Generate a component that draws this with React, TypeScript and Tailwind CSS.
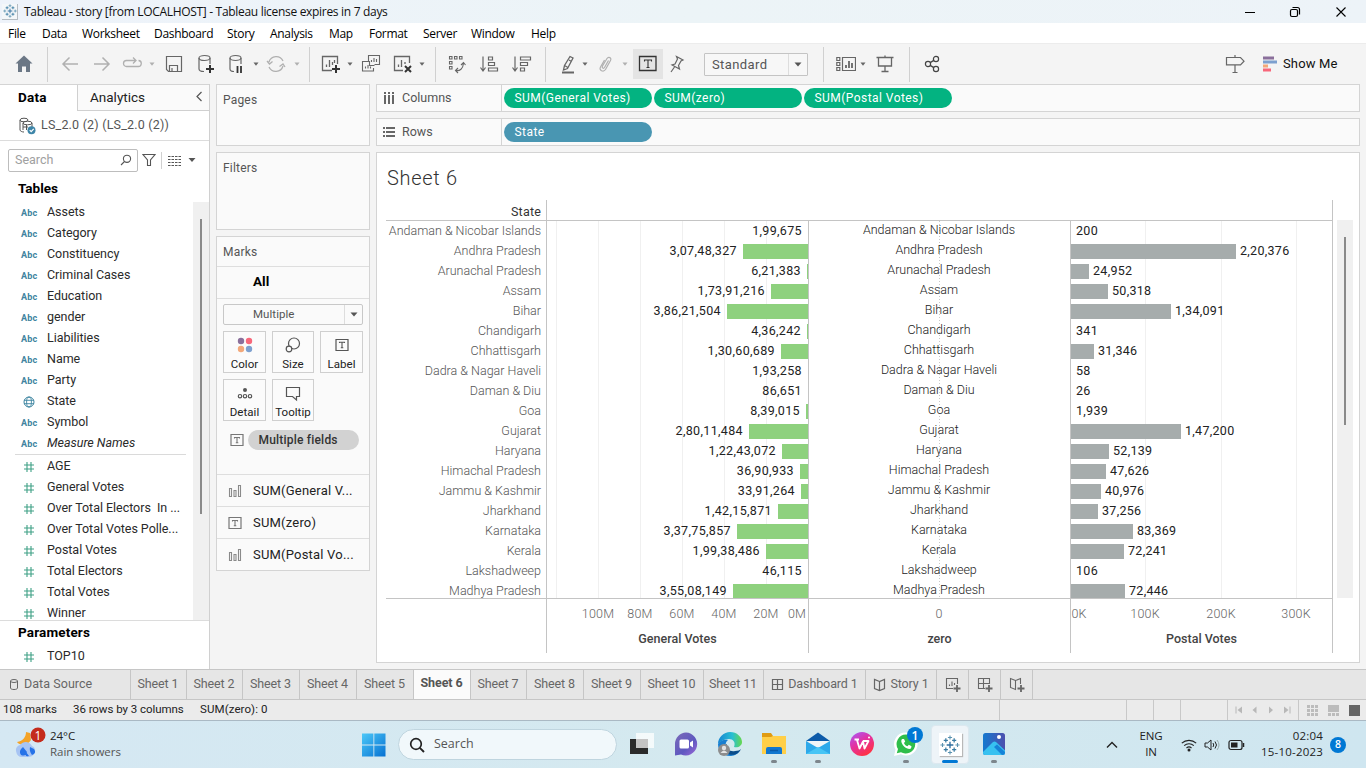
import React from "react";

const SEG = "font-['Open_Sans','Noto_Sans',sans-serif]";

function Icon({ w = 20, h = 20, className = "", children }: { w?: number; h?: number; className?: string; children: React.ReactNode }) {
  return (
    <svg width={w} height={h} viewBox={`0 0 ${w} ${h}`} fill="none" stroke="currentColor" strokeWidth="1.2" className={`block shrink-0 ${className}`}>
      {children}
    </svg>
  );
}

function Caret({ className = "" }: { className?: string }) {
  return (
    <svg width="8" height="20" viewBox="0 0 8 20" className={`block shrink-0 ${className}`}>
      <path d="M1.5 8.5h5L4 11.7z" fill="currentColor" />
    </svg>
  );
}

function Sep({ className = "" }: { className?: string }) {
  return <div className={`h-[35px] w-px shrink-0 bg-[#d0d0d0] ${className}`} />;
}

function Logo({ size }: { size: number }) {
  return (
    <svg width={size} height={size} viewBox="0 0 24 24" className="block shrink-0" fill="none">
      <path d="M12 8v8M8 12h8" stroke="#2f6f9f" strokeWidth="1.6" />
      <path d="M7 4v5M4.5 6.5h5M17 4v5M14.5 6.5h5M7 15v5M4.500 17.500h5M17 15v5M14.500 17.500h5" stroke="#3a7ca3" strokeWidth="1.5" />
      <path d="M12 .5v5M9.500 3h5M12 18.500v5M9.500 21h5M3 9.500v5M.5 12h5M21 9.500v5M18.500 12h5" stroke="#5b93b0" strokeWidth="1.300" />
    </svg>
  );
}

function TitleBar() {
  return (
    <div className={`flex h-[23px] shrink-0 items-center bg-linear-to-r from-[#eef3fa] via-[#ecf4f7] to-[#edf3f8] ${SEG}`}>
      <div className="ml-[2px] flex size-4 items-center justify-center border-r border-b border-[#b5bcc2] bg-[#f4f7f9]">
        <Logo size={14} />
      </div>
      <span className="ml-[6px] text-[12px] tracking-[-0.310px] whitespace-nowrap text-[#111]">Tableau - story [from LOCALHOST] - Tableau license expires in 7 days</span>
      <div className="mr-[19px] ml-auto flex items-center gap-[34px] text-black">
        <Icon w={12} h={12} className="-mr-px"><path d="M1 6.500h10" strokeWidth="1" /></Icon>
        <Icon w={12} h={12}><rect x="1.500" y="3.500" width="7" height="7" rx="1.500" /><path d="M3.500 1.500h5q2 0 2 2v5" /></Icon>
        <Icon w={12} h={12}><path d="M1.500 1.500l9 9M10.500 1.500l-9 9" strokeWidth="1.100" /></Icon>
      </div>
    </div>
  );
}

function MenuBar() {
  const items: [string, string][] = [
    ["File", "w-[34px]"], ["Data", "w-[40px]"], ["Worksheet", "w-[72px]"], ["Dashboard", "w-[73px]"], ["Story", "w-[43px]"],
    ["Analysis", "w-[59px]"], ["Map", "w-[40px]"], ["Format", "w-[54px]"], ["Server", "w-[48px]"], ["Window", "w-[60px]"], ["Help", "w-[40px]"],
  ];
  return (
    <div className={`flex h-[20px] shrink-0 items-center bg-white pt-px pl-2 text-[12px] tracking-[-0.300px] text-black ${SEG}`}>
      {items.map(([t, w]) => <span key={t} className={`${w} shrink-0 whitespace-nowrap`}>{t}</span>)}
    </div>
  );
}

function Toolbar() {
  return (
    <div className="flex h-[41px] shrink-0 items-center border-t border-[#ececec] bg-[#f4f4f4] text-[#666]">
      <div className="flex w-[47px] shrink-0 justify-center pl-px text-[#6b7785]">
        <Icon><path d="M10 1.500L18.500 9.500H16V18h-4v-5.500H8V18H4V9.500H1.500z" fill="currentColor" stroke="none" /></Icon>
      </div>
      <Sep />
      <Icon className="ml-[12px] text-[#b0b0b0]"><path d="M18 10H3M9.500 3.500L3 10l6.500 6.500" strokeWidth="1.500" /></Icon>
      <Icon className="ml-[12px] text-[#b0b0b0]"><path d="M2 10h15M10.500 3.500L17 10l-6.500 6.500" strokeWidth="1.500" /></Icon>
      <Icon className="ml-[10px] text-[#b0b0b0]"><path d="M9 12.500H4.500a3 3 0 0 1 0-6H14M11 3.500l3 3-3 3M9 12.500h7a3 3 0 0 0 .5-6" strokeWidth="1.300" /></Icon>
      <Caret className="ml-[6px] text-[#b0b0b0]" />
      <Icon className="ml-[8px]"><path d="M2.500 2.500h15v15h-13l-2-2zM5.500 17v-5.500h8V17M8 14v3" /></Icon>
      <Icon className="ml-[12px]"><ellipse cx="8.500" cy="4" rx="5.500" ry="2.500" /><path d="M3 4v11c0 1.500 2 2.500 5 2.500M14 4v6" /><path d="M14 11v8M10 15h8" stroke="#333" strokeWidth="2" /></Icon>
      <Icon className="ml-[10px]"><ellipse cx="9.500" cy="4" rx="5.500" ry="2.500" /><path d="M4 4v11c0 1.500 2 2.500 4 2.500M15 4v6" /><path d="M11.500 12v7M15 12v7" stroke="#333" strokeWidth="1.800" /></Icon>
      <Caret className="ml-[6px]" />
      <Icon className="ml-[6px] text-[#b0b0b0]"><path d="M3 8a7.500 7.500 0 0 1 14-1M17 12a7.500 7.500 0 0 1-14 1M1 7l2.500 3L6.500 7.500M13.500 12.500l3.500-2.500 2 3" strokeWidth="1.300" /></Icon>
      <Caret className="ml-[7px] text-[#b0b0b0]" />
      <Sep className="ml-[8px]" />
      <Icon className="ml-[11px]"><path d="M11 16.500H1.500v-14h15V10M5.500 13v-2.500M8.500 13V6M11.500 11V8M13.500 9V6" strokeWidth="1.300" /><path d="M15 11v8M11 15h8" stroke="#333" strokeWidth="2" /></Icon>
      <Caret className="ml-[5px]" />
      <Icon className="ml-[7px]"><path d="M7.500 7V1.500h11v9h-5M12.500 14v3h-11V7.500h7v4h5M10.500 8V6M13 8V4M15.500 8V5M4.500 14.500v-2M7 14.500V11M9.500 14.500v-2" strokeWidth="1.100" /></Icon>
      <Icon className="ml-[12px]"><path d="M10 16.500H1.500v-14h15V9M5.500 13v-2.500M8.500 13V6M12 10V8" strokeWidth="1.300" /><path d="M12 12l6 6M18 12l-6 6" stroke="#333" strokeWidth="2" /></Icon>
      <Caret className="ml-[5px]" />
      <Sep className="ml-[9px]" />
      <Icon className="ml-[11px]"><path d="M2.500 2.500h2.500v2.500h-2.500zM7.500 2.500h2.500v2.500h-2.500zM12.500 2.500H15v2.500h-2.500zM2.500 7.500h2.500V10h-2.500zM2.500 12.500h2.500V15h-2.500zM8.500 16.500q7 1 8-7M14 11l2.500-2.500L18.500 11M11 14l-2.500 2.500L11 19" strokeWidth="1.100" /></Icon>
      <Icon className="ml-[12px]"><path d="M4 2.500v14M1.500 13.500L4 17l2.500-3.500M9.500 3h4v3h-4zM9.500 8.500h6v3h-6zM9.500 14h9v3h-9z" /></Icon>
      <Icon className="ml-[13px]"><path d="M3 2.500v14M.5 13.500L3 17l2.500-3.500M8.500 3h10v3h-10zM8.500 8.500h7v3h-7zM8.500 14h4v3h-4z" /></Icon>
      <Sep className="ml-[13px]" />
      <Icon className="ml-[12px]"><path d="M12 2.500l3 1.500-5.500 10.500-4 1.500 1-4.500zM11 6l2.500 1.500M6.500 11.500l3 1.800" strokeWidth="1.300" /><path d="M4 18.500h12" strokeWidth="2" /></Icon>
      <Caret className="ml-[3px]" />
      <Icon className="ml-[6px] text-[#b0b0b0]"><path d="M13.500 6.500l-4 7c-1 1.500-3 .5-2-1.500l4.500-7.500c1.500-2.500 5-.5 3.500 2l-5 9c-2 3-7 1-5-2.500l4-7" strokeWidth="1.200" /></Icon>
      <Caret className="ml-[6px] text-[#b0b0b0]" />
      <div className="ml-[4px] flex size-[30px] shrink-0 items-center justify-center bg-[#e4e4e4] text-[#333]">
        <Icon><path d="M1.500 2.500h16.500v14h-16.500z" strokeWidth="1.300" /><path d="M6.500 7.500V6h7v1.500M10 6v7.500M8.500 13.500h3" strokeWidth="1.100" /></Icon>
      </div>
      <Icon className="ml-[4px]"><path d="M9.500 2.500l6.500 3.500-2 1-2.500 4.500 1 3.500-7.500-4 3-1L10.500 5zM7.500 13l-3.500 5" strokeWidth="1.200" /></Icon>
      <div className="ml-[17px] flex h-[23px] w-[104px] shrink-0 items-center rounded-[1px] border border-[#c4c4c4] bg-[#f7f7f7]">
        <span className="w-[84px] border-r border-[#ddd] pl-[7px] text-[13px] leading-[21px] tracking-[0.400px] text-[#555]">Standard</span>
        <svg width="18" height="20" viewBox="0 0 18 20"><path d="M5.500 8.500h7L9 12.500z" fill="#555" /></svg>
      </div>
      <Sep className="ml-[15px]" />
      <Icon className="ml-[12px]"><path d="M.8 3.500h3v3h-3zM.8 8.500h3v3h-3zM.8 13.500h3v3h-3zM6.500 3.500h13v13h-13z" /><path d="M10 14v-3M13 14V7M16 14V9" strokeWidth="1.800" /></Icon>
      <Caret className="ml-[3px]" />
      <Icon className="ml-[8px]"><path d="M1.500 3.500h17M3.500 3.500v8.500h13V3.500M10 1.500v2M10 12v5.500M6.500 17.500h7" strokeWidth="1.300" /></Icon>
      <Sep className="ml-[14px]" />
      <Icon className="ml-[12px] text-[#444]"><circle cx="6" cy="10" r="2.600" /><circle cx="14" cy="5" r="2.600" /><circle cx="14" cy="15" r="2.600" /><path d="M8.200 8.600L11.800 6.400M8.200 11.400l3.600 2.200" strokeWidth="1.300" /></Icon>
      <Icon className="mr-[18px] ml-auto"><path d="M1.500 3.500h14l3.500 3.700-3.500 3.700h-14zM10 1v2.500M10 11v7.500M7.500 18.500h5" /></Icon>
      <svg width="14" height="16" viewBox="0 0 14 16" className="shrink-0"><path d="M0 .5h11v3H0z" fill="#8a6f9b" /><path d="M0 4.500h14v3H0z" fill="#7da0cf" /><path d="M0 8.500h5v3H0z" fill="#f3a87a" /><path d="M0 12.500h8v3H0z" fill="#f8677a" /></svg>
      <span className="mr-[28px] ml-[6px] w-[55px] text-[13px] tracking-[0.150px] whitespace-nowrap text-[#111]">Show Me</span>
    </div>
  );
}

const DIMS = ["Assets", "Category", "Constituency", "Criminal Cases", "Education", "gender", "Liabilities", "Name", "Party", "State", "Symbol", "Measure Names"];
const MEAS = ["AGE", "General Votes", "Over Total Electors  In ...", "Over Total Votes Polle...", "Postal Votes", "Total Electors", "Total Votes", "Winner"];

function Hash() {
  return <Icon w={12} h={12} className="mr-[12px] ml-[23px] text-[#3fa085]"><path d="M4 1v10M8 1v10M1 4h10M1 8h10" strokeWidth="1.100" /></Icon>;
}

function Field({ name, kind }: { name: string; kind: "dim" | "mea" }) {
  return (
    <div className="flex h-[21px] shrink-0 items-center text-[12.5px] tracking-[-0.030px] whitespace-pre text-[#2a2a2a]">
      {kind === "mea" ? <Hash /> : name === "State" ? (
        <Icon w={12} h={12} className="mr-[12px] ml-[23px] text-[#3d85a0]"><circle cx="6" cy="6" r="5" strokeWidth="1" /><ellipse cx="6" cy="6" rx="2.400" ry="5" strokeWidth="0.900" /><path d="M1 4.300h10M1 7.700h10" strokeWidth="0.900" /></Icon>
      ) : <span className="ml-[21px] w-[26px] pt-[2px] text-[9px] font-bold tracking-[0.2px] text-[#4084a0]">Abc</span>}
      <span className={name === "Measure Names" ? "italic" : ""}>{name}</span>
    </div>
  );
}

function DataPane() {
  return (
    <div className="flex w-[210px] shrink-0 flex-col border-r border-[#d0d0d0] bg-white">
      <div className="flex h-[27px] shrink-0 border-t border-[#d4d4d4]">
        <div className="w-[77px] pt-[3px] pl-[18px] text-[13.500px] leading-[19px] font-bold tracking-[0.200px] text-black">Data</div>
        <div className="flex flex-1 items-start border-b border-l border-[#d0d0d0] bg-[#fafafa] pt-[3px] pl-[12px] text-[13.500px] leading-[19px] text-[#222]">
          Analytics
          <Icon w={8} h={12} className="mt-[3px] mr-[6px] ml-auto text-[#555]"><path d="M6.500 1L2 5.500 6.500 10" /></Icon>
        </div>
      </div>
      <div className="flex h-[30px] shrink-0 items-center border-b border-[#dcdcdc] text-[12.500px] tracking-[0.200px] text-[#555]">
        <Icon w={18} h={18} className="mr-[4px] ml-[19px]"><ellipse cx="5" cy="3" rx="4" ry="1.800" strokeWidth="1" /><path d="M1 3v10c0 1 2 2 4 2" strokeWidth="1" /><ellipse cx="8.500" cy="6" rx="4.500" ry="1.800" strokeWidth="1" /><path d="M4 6v7M13 6v4M4 10h5M7.500 8v5" strokeWidth="1" /><circle cx="12.500" cy="13.200" r="4" fill="#3d85a8" stroke="none" /><path d="M10.700 13.200l1.500 1.500 2.500-2.800" stroke="#fff" /></Icon>
        LS_2.0 (2) (LS_2.0 (2))
      </div>
      <div className="flex h-[37px] shrink-0 items-center pt-px pl-2 text-[#555]">
        <div className="flex h-[23px] w-[130px] items-center rounded-[2px] border border-[#bdbdbd] pl-[6px] text-[12.500px] text-[#a0a0a0]">
          Search
          <Icon w={12} h={12} className="mr-[5px] ml-auto text-[#555]"><circle cx="7" cy="4.800" r="3.600" strokeWidth="1.100" /><path d="M4.500 7.500L1 11" strokeWidth="1.100" /></Icon>
        </div>
        <Icon w={14} h={14} className="ml-[4px]"><path d="M1 1.500h12L8.500 7v5.500h-3V7z" strokeWidth="1.100" /></Icon>
        <div className="ml-[5px] h-[17px] w-px bg-[#d0d0d0]" />
        <Icon w={13} h={11} className="ml-[6px]"><path d="M0 1.500h13M0 4.500h13M0 7.500h13M0 10.500h13" strokeDasharray="2.500 1" strokeWidth="1" /></Icon>
        <Icon w={8} h={8} className="ml-[7px]"><path d="M.5 2h7L4 6z" fill="currentColor" stroke="none" /></Icon>
      </div>
      <div className="h-[24px] shrink-0 pl-[18px] text-[13.500px] leading-[20px] font-bold text-black">Tables</div>
      <div className="flex h-[418px] shrink-0 overflow-hidden">
        <div className="flex w-[193px] flex-col">
          {DIMS.map((d) => <Field key={d} name={d} kind="dim" />)}
          <div className="mr-[7px] ml-[15px] h-px shrink-0 bg-[#dadada]" />
          <div className="h-px shrink-0" />
          {MEAS.map((d) => <Field key={d} name={d} kind="mea" />)}
        </div>
        <div className="h-full w-4 bg-[#f0f0f0] pt-[17px] pl-[7px]"><div className="h-[295px] w-[2px] bg-[#8a8a8a]" /></div>
      </div>
      <div className="flex-1 border-t border-[#dcdcdc]">
        <div className="h-[25px] pl-[18px] text-[13.500px] leading-[23px] font-bold tracking-[0.150px] text-black">Parameters</div>
        <Field name="TOP10" kind="mea" />
      </div>
    </div>
  );
}

function MarkButton({ label, children }: { label: string; children: React.ReactNode }) {
  return (
    <div className="flex h-[42px] flex-col items-center justify-between border border-[#cfcfcf] bg-[#fbfbfb] pt-[4px] text-[11.500px] leading-[15px] tracking-[0.050px] whitespace-nowrap text-[#222]">
      <Icon className="text-[#555]" w={18} h={18}>{children}</Icon>
      <span className="shrink-0">{label}</span>
    </div>
  );
}

function BarsIcon() {
  return <Icon w={14} h={14} className="mr-[11px] ml-[11px] text-[#8a8a8a]"><path d="M1.500 4.500h2v8h-2zM6 6.500h2v6H6zM10.500 1.500h2v11h-2z" strokeWidth="1.100" /></Icon>;
}

function TBox({ className = "" }: { className?: string }) {
  return <Icon w={14} h={14} className={className}><path d="M1 1.500h12v11H1z" /><path d="M4.500 5.500V4.500h5v1M7 4.500v5M5.800 9.700h2.500" strokeWidth="1.100" /></Icon>;
}

function Cards() {
  return (
    <div className="ml-[6px] flex w-[154px] shrink-0 flex-col gap-[6px] text-[12px] tracking-[0.2px] text-[#555]">
      <div className="h-[62px] shrink-0 border border-[#d4d4d4] bg-[#fafafa] pt-[6px] pl-[6px] leading-[18px]">Pages</div>
      <div className="h-[78px] shrink-0 border border-[#d4d4d4] bg-[#fafafa] pt-[6px] pl-[6px] leading-[18px]">Filters</div>
      <div className="flex h-[335px] shrink-0 flex-col border border-[#d4d4d4] bg-[#fafafa]">
        <div className="h-[30px] shrink-0 border-b border-[#dedede] pl-[6px] leading-[31px]">Marks</div>
        <div className="h-[32px] shrink-0 border-b border-[#dedede] pl-[36px] text-[13.500px] leading-[29px] font-bold tracking-normal text-black">All</div>
        <div className="mx-[6px] mt-[5px] flex h-[21px] shrink-0 items-center rounded-[2px] border border-[#c8c8c8] text-[11.500px] tracking-[0.050px]">
          <span className="flex-1 pl-[29px]">Multiple</span>
          <span className="flex h-full w-[18px] items-center justify-center border-l border-[#ddd]">
            <svg width="8" height="5"><path d="M.5.5h7L4 4.500z" fill="#555" /></svg>
          </span>
        </div>
        <div className="mx-[6px] mt-[6px] grid shrink-0 grid-cols-[43px_42px_43px] gap-[6px]">
          <MarkButton label="Color"><circle cx="5" cy="5" r="3.200" fill="#8a6f9b" stroke="none" /><circle cx="13" cy="5" r="3.200" fill="#f8677a" stroke="none" /><circle cx="5" cy="13" r="3.200" fill="#f3a87a" stroke="none" /><circle cx="13" cy="13" r="3.200" fill="#7da0cf" stroke="none" /></MarkButton>
          <MarkButton label="Size"><circle cx="10" cy="7.500" r="5.500" /><circle cx="5" cy="13" r="2.800" fill="#fbfbfb" /></MarkButton>
          <MarkButton label="Label"><path d="M3 3.500h12v11H3z" /><path d="M6.500 7V6.300h5V7M9 6.300v5M7.800 11.700h2.500" strokeWidth="1.100" /></MarkButton>
          <MarkButton label="Detail"><circle cx="9" cy="6" r="2" fill="currentColor" stroke="none" /><circle cx="4" cy="12.200" r="1.700" /><circle cx="9" cy="12.200" r="1.700" /><circle cx="14" cy="12.200" r="1.700" /></MarkButton>
          <MarkButton label="Tooltip"><path d="M2.500 3.500h13v9h-3v3.500l-4-3.500h-6z" /></MarkButton>
        </div>
        <div className="flex h-[54px] shrink-0 items-start border-b border-[#dedede] pt-[9px]">
          <TBox className="mt-[3px] ml-[13px] text-[#777]" />
          <div className="ml-[4px] h-[20px] w-[111px] rounded-full bg-[#d2d2d2] pl-[10.500px] text-[12px] leading-[20px] font-medium text-[#333]">Multiple fields</div>
        </div>
        <div className="flex h-[32px] shrink-0 items-center border-b border-[#dedede] pt-px text-[13px] text-[#222]"><BarsIcon />SUM(General V...</div>
        <div className="flex h-[32px] shrink-0 items-center border-b border-[#dedede] pt-px text-[13px] text-[#222]"><TBox className="mr-[11px] ml-[11px] text-[#777]" />SUM(zero)</div>
        <div className="flex h-[31px] shrink-0 items-center pt-px text-[13px] text-[#222]"><BarsIcon />SUM(Postal Vo...</div>
      </div>
    </div>
  );
}

function Shelf({ label, icon, pills, pillClass }: { label: string; icon: React.ReactNode; pills: string[]; pillClass: string }) {
  return (
    <div className="flex h-[28px] shrink-0 border border-[#d4d4d4] bg-[#fafafa] text-[12.500px]">
      <div className="flex w-[125px] items-center border-r border-[#d4d4d4] pl-[6px] text-[#555]">{icon}{label}</div>
      <div className="flex items-center gap-[2px] pl-[2px]">
        {pills.map((p) => <div key={p} className={`h-[20px] w-[148px] rounded-full pl-[10.500px] text-[12px] leading-[20px] tracking-[0.450px] text-white ${pillClass}`}>{p}</div>)}
      </div>
    </div>
  );
}

const ROWS: [string, string, string][] = [
  ["Andaman & Nicobar Islands", "1,99,675", "200"],
  ["Andhra Pradesh", "3,07,48,327", "2,20,376"],
  ["Arunachal Pradesh", "6,21,383", "24,952"],
  ["Assam", "1,73,91,216", "50,318"],
  ["Bihar", "3,86,21,504", "1,34,091"],
  ["Chandigarh", "4,36,242", "341"],
  ["Chhattisgarh", "1,30,60,689", "31,346"],
  ["Dadra & Nagar Haveli", "1,93,258", "58"],
  ["Daman & Diu", "86,651", "26"],
  ["Goa", "8,39,015", "1,939"],
  ["Gujarat", "2,80,11,484", "1,47,200"],
  ["Haryana", "1,22,43,072", "52,139"],
  ["Himachal Pradesh", "36,90,933", "47,626"],
  ["Jammu & Kashmir", "33,91,264", "40,976"],
  ["Jharkhand", "1,42,15,871", "37,256"],
  ["Karnataka", "3,37,75,857", "83,369"],
  ["Kerala", "1,99,38,486", "72,241"],
  ["Lakshadweep", "46,115", "106"],
  ["Madhya Pradesh", "3,55,08,149", "72,446"],
];
const num = (s: string) => Number(s.replace(/,/g, ""));

function GridLines({ at, dotted = false }: { at: number[]; dotted?: boolean }) {
  return (
    <svg width="261" height="377" className="absolute top-0 left-0">
      {at.map((x) => <path key={x} d={`M${x + 0.5} 0V377`} stroke={dotted ? "#c8c8c8" : "#f0f0f0"} strokeDasharray={dotted ? "1 2" : undefined} />)}
    </svg>
  );
}

function AxisLabels({ ticks }: { ticks: [number, string][] }) {
  return (
    <svg width="261" height="26" className="block overflow-visible">
      {ticks.map(([x, t]) => <text key={t} x={x} y="19" textAnchor="middle" fill="#666" className="text-[12.500px] font-light tracking-[0.200px]">{t}</text>)}
    </svg>
  );
}

function Chart() {
  return (
    <div className="ml-[9px] grid w-[947px] grid-cols-[161px_262px_262px_262px] grid-rows-[21px_378px_54px] text-[12.500px]">
      <div className="border-r border-b border-[#c4c4c4] pr-[5px] text-right leading-[23px] tracking-[0.200px] text-[#333]">State</div>
      <div className="col-span-3 border-r border-b border-[#c4c4c4]" />

      <div className="overflow-hidden border-r border-b border-[#c4c4c4]">
        {ROWS.map(([s]) => <div key={s} className="h-[20px] pr-[5px] text-right text-[12.500px] leading-[20px] font-light whitespace-nowrap text-[#555]">{s}</div>)}
      </div>
      <div className="relative overflow-hidden border-r border-b border-[#c4c4c4]">
        <GridLines at={[9, 51, 93, 135, 177, 219]} />
        {ROWS.map(([s, g]) => (
          <div key={s} className="relative flex h-[20px] items-center justify-end leading-[20px] tracking-[0.350px] text-[#222]">
            <span className="mr-[6px]">{g}</span>
            <div className="h-[15px] bg-[#8ed17e]" style={{ width: Math.round((num(g) / 1e6) * 2.1) }} />
          </div>
        ))}
      </div>
      <div className="relative overflow-hidden border-r border-b border-[#c4c4c4]">
        <GridLines at={[130]} dotted />
        {ROWS.map(([s]) => <div key={s} className="relative h-[20px] pr-px text-center text-[12.500px] leading-[18px] font-light whitespace-nowrap text-[#222]">{s}</div>)}
      </div>
      <div className="relative overflow-hidden border-r border-b border-[#c4c4c4]">
        <GridLines at={[74, 150, 225]} />
        {ROWS.map(([s, , p]) => (
          <div key={s} className="relative flex h-[20px] items-center leading-[20px] tracking-[0.300px] text-[#222]">
            <div className="h-[15px] bg-[#a6acac]" style={{ width: Math.round((num(p) / 1e5) * 75.3) - 1 }} />
            <span className={num(p) > 5000 ? "ml-[4px]" : "ml-[5px]"}>{p}</span>
          </div>
        ))}
      </div>

      <div className="border-r border-[#c4c4c4]" />
      <div className="border-r border-[#c4c4c4] text-center leading-[27px] font-medium text-[#444]">
        <AxisLabels ticks={[[51, "100M"], [93, "80M"], [135, "60M"], [177, "40M"], [219, "20M"], [250, "0M"]]} />General Votes
      </div>
      <div className="border-r border-[#c4c4c4] text-center leading-[27px] font-medium text-[#444]">
        <AxisLabels ticks={[[130, "0"]]} />zero
      </div>
      <div className="border-r border-[#c4c4c4] text-center leading-[27px] font-medium text-[#444]">
        <AxisLabels ticks={[[8, "0K"], [74, "100K"], [150, "200K"], [225, "300K"]]} />Postal Votes
      </div>
    </div>
  );
}

function Sheet() {
  return (
    <div className="ml-[6px] flex w-[984px] shrink-0 flex-col gap-[6px]">
      <Shelf label="Columns" pills={["SUM(General Votes)", "SUM(zero)", "SUM(Postal Votes)"]} pillClass="bg-[#03b381]"
        icon={<svg width="12" height="12" className="mr-[7px]"><path d="M1 0h2v2H1zM5 0h2v2H5zM9 0h2v2H9zM1 3h2v9H1zM5 3h2v9H5zM9 3h2v9H9z" fill="#666" /></svg>} />
      <Shelf label="Rows" pills={["State"]} pillClass="bg-[#4996b2]"
        icon={<svg width="12" height="12" className="mr-[7px]"><path d="M0 1h2v2H0zM0 5h2v2H0zM0 9h2v2H0zM3 1h9v2H3zM3 5h9v2H3zM3 9h9v2H3z" fill="#666" /></svg>} />
      <div className="h-[511px] shrink-0 border border-[#d4d4d4] bg-white">
        <div className="h-[47px] pt-[10px] pl-[10px] text-[20px] leading-[31px] font-light tracking-[0.700px] text-[#333]">Sheet 6</div>
        <div className="flex">
          <Chart />
          <div className="mt-[20px] ml-[4px] h-[378px] w-4 bg-[#f0f0f0] pt-[17px] pl-[7px]"><div className="h-[188px] w-[2px] bg-[#8a8a8a]" /></div>
        </div>
      </div>
    </div>
  );
}

const GRID_D = "M1.500 1.500h10v10h-10zM6.500 1.500v10M1.500 6.500h10";
const BOOK_D = "M6.500 3.500L1.500 1.500v9l5 2 5-2v-9zM6.500 3.500v9";

function Tabs() {
  const tabs: [string, string][] = [
    ["Sheet 1", "w-[56px]"], ["Sheet 2", "w-[56px]"], ["Sheet 3", "w-[57px]"], ["Sheet 4", "w-[57px]"], ["Sheet 5", "w-[57px]"], ["Sheet 6", "w-[57px]"],
    ["Sheet 7", "w-[56px]"], ["Sheet 8", "w-[57px]"], ["Sheet 9", "w-[57px]"], ["Sheet 10", "w-[63px]"], ["Sheet 11", "w-[60px]"],
  ];
  const cell = "flex h-full shrink-0 items-center justify-center border-r border-[#c6c6c6] whitespace-nowrap";
  return (
    <div className="flex h-[31px] shrink-0 items-center border-t border-b border-[#c6c6c6] bg-[#e6e6e6] text-[12.500px] tracking-[-0.100px] text-[#666]">
      <div className={`${cell} w-[131px] justify-start! pl-[9px]`}>
        <Icon w={10} h={13} className="mr-[5px]"><ellipse cx="5" cy="3" rx="3.500" ry="1.500" strokeWidth="1" /><path d="M1.500 3v7c0 2 7 2 7 0V3" strokeWidth="1" /></Icon><span className="tracking-[0.050px]">Data Source</span>
      </div>
      {tabs.map(([t, w]) => <div key={t} className={`${cell} ${w} pr-px ${t === "Sheet 6" ? "bg-[#fbfbfb] pb-[2px] font-bold text-[#555]" : ""}`}>{t}</div>)}
      <div className={`${cell} w-[102px] gap-[4px]`}><Icon w={13} h={13}><path d={GRID_D} /></Icon>Dashboard 1</div>
      <div className={`${cell} w-[71px] gap-[4px]`}><Icon w={13} h={14}><path d={BOOK_D} /></Icon>Story 1</div>
      <div className={`${cell} w-[32px]`}><Icon w={16} h={16}><path d="M8 11.500H1.500v-10h11V7M4.500 9V7.500M7 9V4.500M9.500 8V6" strokeWidth="1.100" /><path d="M12 8v7M8.500 11.500h7" strokeWidth="1.800" /></Icon></div>
      <div className={`${cell} w-[32px]`}><Icon w={16} h={16}><path d="M8 11.500H1.500v-10h11V7M6.500 1.500v10M1.500 6.500h11" strokeWidth="1.100" /><path d="M12 8v7M8.500 11.500h7" strokeWidth="1.800" /></Icon></div>
      <div className={`${cell} w-[32px]`}><Icon w={16} h={16}><path d="M6.500 3.500L1.500 1.500v9l5 2v-9l5-2V7" strokeWidth="1.100" /><path d="M12 8v7M8.500 11.500h7" strokeWidth="1.800" /></Icon></div>
    </div>
  );
}

function StatusBar() {
  return (
    <div className="flex h-[21px] shrink-0 items-center border-b border-[#aab9c4] bg-[#ebebeb] text-[11.500px] tracking-[-0.050px] whitespace-nowrap text-[#222]">
      <span className="w-[71px] pl-[3px]">108 marks</span>
      <span className="w-[127px] pl-[2px]">36 rows by 3 columns</span>
      <span className="pl-[2px] tracking-[0.100px]">SUM(zero): 0</span>
      <div className="ml-auto flex h-full items-center text-[#b8b8b8]">
        <div className="h-full w-[128px] border-r border-l border-[#c8c8c8]" />
        <div className="h-full w-[27px] border-r border-[#c8c8c8]" />
        <div className="h-full w-[27px] border-r border-[#c8c8c8]" />
        <div className="h-full w-[47px] border-r border-[#c8c8c8]" />
        <div className="flex h-full w-[71px] items-center border-r border-[#c8c8c8] pl-[7px]">
          <svg width="60" height="8" fill="currentColor"><path d="M.5.5h1v7h-1zM7 .5v7L2.500 4zM21.500.5v7L17.500 4zM34 .5v7L38 4zM49 .5v7L53.500 4zM54.500.5h1v7h-1z" /></svg>
        </div>
        <svg width="55" height="11" className="mr-[4px] ml-[8px]"><path d="M0 0h3v3H0zM4 0h3v3H4zM8 0h3v3H8zM0 4h3v3H0zM4 4h3v3H4zM8 4h3v3H8zM0 8h3v3H0zM4 8h3v3H4zM8 8h3v3H8zM21 0h11v7H21zM21 8h3v3h-3zM25 8h3v3h-3zM29 8h3v3h-3z" fill="#bcbcbc" /><path d="M42 0h11v11H42z" fill="#666" /></svg>
      </div>
    </div>
  );
}

function App24({ dot = false, children }: { dot?: boolean; children: React.ReactNode }) {
  return (
    <div className="flex h-[47px] w-[44px] shrink-0 flex-col items-center pt-[11px]">
      <svg width="24" height="24" viewBox="0 0 24 24" className="overflow-visible">{children}</svg>
      {dot && <div className="mt-[4px] h-[3px] w-[6px] rounded-full bg-[#7d868c]" />}
    </div>
  );
}

function Taskbar() {
  return (
    <div className={`flex h-[47px] shrink-0 items-center bg-linear-to-r from-[#d5e8f3] via-[#d4e9ef] via-55% to-[#cfe6f0] ${SEG} text-[#222]`}>
      <svg width="30" height="34" viewBox="0 0 30 34" className="mb-[5px] ml-[14px] shrink-0 overflow-visible">
        <path d="M12 7c0 5-3 9-9 10 3 4 10 4 14-2l-1-7z" fill="#f4a327" />
        <path d="M2 26a5 5 0 0 1 4-6 7 7 0 0 1 12 1 5 5 0 0 1 2 8q-2 3-6 3H8q-5 0-6-6z" fill="#a7c4f3" />
        <path d="M9 22q-5 4-2 8 5 2 6-3zM16 22q-1 4 2 8 5-2 2-6zM12 27q-2 5 3 4z" fill="#2673e8" />
        <circle cx="24" cy="10" r="7.500" fill="#c42b1c" />
        <text x="24" y="14.500" textAnchor="middle" fontSize="12" fill="#fff">1</text>
      </svg>
      <div className="mb-px ml-[6px] w-[300px] shrink-0 text-[11.500px] leading-[16px] tracking-[-0.050px]">
        <div>24°C</div><div className="text-[#555]">Rain showers</div>
      </div>
      <div className="ml-[12px] w-[36px] shrink-0">
        <svg width="24" height="24" viewBox="0 0 24 24">
          <defs><linearGradient id="win" x1="0" y1="0" x2="1" y2="1"><stop offset="0" stopColor="#4cc8f8" /><stop offset="1" stopColor="#0671d2" /></linearGradient></defs>
          <path d="M0 .5h11.400v11H0zM12.300.5H23.500v11H12.300zM0 12.500h11.400v11H0zM12.300 12.500H23.500v11H12.300z" fill="url(#win)" />
        </svg>
      </div>
      <div className="flex h-[31px] w-[219px] shrink-0 items-center rounded-full border border-[#bfd5df] bg-[#f1f8fb] pl-[10px] text-[12.500px] text-[#555]">
        <Icon w={16} h={16} className="mr-[9px] text-[#222]"><circle cx="7" cy="7" r="5.300" strokeWidth="1.700" /><path d="M10.800 10.800L15 15" strokeWidth="1.900" /></Icon>Search
      </div>
      <div className="ml-[3px] flex shrink-0">
        <App24><path d="M0 7h18v15H0z" fill="#2b2b2b" /><path d="M6 1h18v15H6z" fill="#fff" opacity=".75" /><path d="M6 7h12v9H6z" fill="#c4c4c4" /></App24>
        <App24><defs><linearGradient id="chat" x1="0" y1="0" x2="1" y2="1"><stop offset="0" stopColor="#7b6bb8" /><stop offset=".6" stopColor="#5e58c0" /><stop offset="1" stopColor="#a06ad8" /></linearGradient></defs><path d="M12 .5a11.500 11.500 0 1 1-5 22L1 23.500V12A11.500 11.500 0 0 1 12 .5z" fill="url(#chat)" /><rect x="5.500" y="7.500" width="9.500" height="9" rx="1.500" fill="#fff" /><path d="M16 10.500l3-2v7l-3-2z" fill="#fff" /></App24>
        <App24><defs><linearGradient id="edge" x1="0" y1="0" x2="1" y2="0"><stop offset="0" stopColor="#1685d3" /><stop offset=".6" stopColor="#29bfd2" /><stop offset="1" stopColor="#66d84c" /></linearGradient></defs><path d="M0 12C0 5 6 0 12 0c7 0 12 5 12 10 0 4-4 6-8 5 2-5-1-8-5-8-5 0-9 3-11 5z" fill="url(#edge)" /><path d="M0 12c2-3 6-5 10-4-4 3-3 10 3 12 4 1 7 0 9-1-3 4-7 5-10 5C5 24 0 19 0 12z" fill="#1a7fd0" /><path d="M9 12c-1 5 3 8 8 7 3 0 5-1 6-2-2 5-9 8-14 4-4-3-3-7 0-9z" fill="#0b4d8a" /><circle cx="6" cy="18" r="6" fill="#8d8d8d" /><circle cx="6" cy="16" r="2.200" fill="#e4e4e4" /><path d="M2.500 21q3.500-5 7 0z" fill="#e4e4e4" /></App24>
        <App24 dot><path d="M0 1h9l2 3h13v17H0z" fill="#e09b12" /><path d="M0 5h9l2-1h13v18H0z" fill="#ffcf48" /><path d="M4 22v-5q0-2 2-2h12q2 0 2 2v5z" fill="#1177cf" /><path d="M8 18.500h8" stroke="#0a5aa8" strokeWidth="1.500" /></App24>
        <App24 dot><path d="M0 9L12 .5 24 9z" fill="#0d5ba9" /><path d="M2 9h20v6H2z" fill="#f1f5f8" /><path d="M0 9l12 7 12-7v13H0z" fill="#2ea9ea" /><path d="M0 22l12-7 12 7z" fill="#47c5f5" /></App24>
        <App24><defs><linearGradient id="wps" x1="0" y1="0" x2=".6" y2="1"><stop offset="0" stopColor="#a35cff" /><stop offset=".5" stopColor="#e331a2" /><stop offset="1" stopColor="#ff3344" /></linearGradient></defs><circle cx="12" cy="12" r="12" fill="url(#wps)" /><path d="M4.500 7.500H9M7 8l2.500 8.500L13 9.500l1.500 7L18.500 9H13" stroke="#fff" strokeWidth="1.800" fill="none" strokeLinejoin="round" /><circle cx="19" cy="5.500" r="1" fill="#fff" /></App24>
        <App24 dot><path d="M12 .5a11.500 11.500 0 1 1-5 21.800L0 24l1.500-6.500A11.500 11.500 0 0 1 12 .5z" fill="#fff" /><path d="M12 2.500a9.500 9.500 0 1 1-5 17.700L2.800 21.300 4 17A9.500 9.500 0 0 1 12 2.500z" fill="#2fbe4b" /><path d="M8 7c-3 3 4 12 9 9.500l.5-2.200-2.700-1.500-1.300 1.400c-2-.7-3-2-3.500-3.300l1.200-1.300L10 7z" fill="#fff" /><circle cx="21" cy="3" r="8" fill="#0078d4" /><text x="21" y="7.500" textAnchor="middle" fontSize="12" fontWeight="600" fill="#fff">1</text></App24>
        <div className="mx-[3px] mt-[4px] flex h-[39px] w-[38px] shrink-0 flex-col items-center rounded-[4px] border border-[#dce8ef] bg-[#eef4f8] pt-[7px]">
          <div className="flex size-[23px] items-center justify-center bg-white shadow-[1px_1px_1px_#b8b8b8]"><Logo size={20} /></div>
          <div className="mt-auto h-[3px] w-[16px] rounded-full bg-[#0078d4]" />
        </div>
        <App24 dot><defs><linearGradient id="pho" x1="0" y1="0" x2="1" y2="0"><stop offset="0" stopColor="#1479cf" /><stop offset="1" stopColor="#4d4fae" /></linearGradient></defs><rect x="1" y="1" width="22" height="22" rx="2.500" fill="url(#pho)" /><path d="M1 20l10-10q1.500-1 3 0l9 8.500V21q0 2-2 2H3q-2 0-2-2z" fill="#37c1f0" /><path d="M12 15l3-2.500 8 7.500q0 3-3 3z" fill="#1583d8" /><circle cx="17" cy="5" r="2" fill="#fff" /></App24>
      </div>
      <Icon w={12} h={8} className="mr-[20px] ml-auto text-[#222]"><path d="M1 6.500l5-5 5 5" strokeWidth="1.400" /></Icon>
      <div className="mb-px mr-[17px] w-[26px] shrink-0 text-center text-[11.500px] leading-[16px] tracking-[-0.100px]">ENG<br />IN</div>
      <Icon w={16} h={14} className="mr-[7px]"><path d="M.8 5.200a10.500 10.500 0 0 1 14.400 0M3.200 7.700a7 7 0 0 1 9.600 0M5.500 10a3.800 3.800 0 0 1 5 0" strokeWidth="1.100" /><circle cx="8" cy="12" r="1.500" fill="currentColor" stroke="none" /></Icon>
      <Icon w={16} h={14} className="mr-[8px]"><path d="M1 5v4h2.500L7 12V2L3.500 5zM9 5q1.500 2 0 4M11 3.500q3 3.500 0 7" strokeWidth="1" /><path d="M13 2q4 5 0 10" stroke="#9aa" strokeWidth="1" /></Icon>
      <Icon w={17} h={12} className="mr-[14px]"><rect x="1" y="1.500" width="13" height="9" rx="2" strokeWidth="1.200" /><path d="M3 3.500h6.500v5H3z" fill="currentColor" stroke="none" /><path d="M15.500 4v4" strokeWidth="1.500" /></Icon>
      <div className="mb-px w-[64px] shrink-0 text-right text-[11.500px] leading-[16px] tracking-[0.200px] whitespace-nowrap">02:04<br />15-10-2023</div>
      <div className="mr-[20px] ml-[7px] flex size-[16px] shrink-0 items-center justify-center rounded-full bg-[#0078d4] text-[10.500px] font-semibold text-white">8</div>
    </div>
  );
}

export default function App() {
  return (
    <div className="flex h-[768px] w-[1366px] flex-col overflow-hidden bg-[#f4f4f4] font-['Roboto','Liberation_Sans',sans-serif]">
      <TitleBar />
      <MenuBar />
      <Toolbar />
      <div className="flex h-[585px] shrink-0">
        <DataPane />
        <Cards />
        <Sheet />
      </div>
      <Tabs />
      <StatusBar />
      <Taskbar />
    </div>
  );
}
